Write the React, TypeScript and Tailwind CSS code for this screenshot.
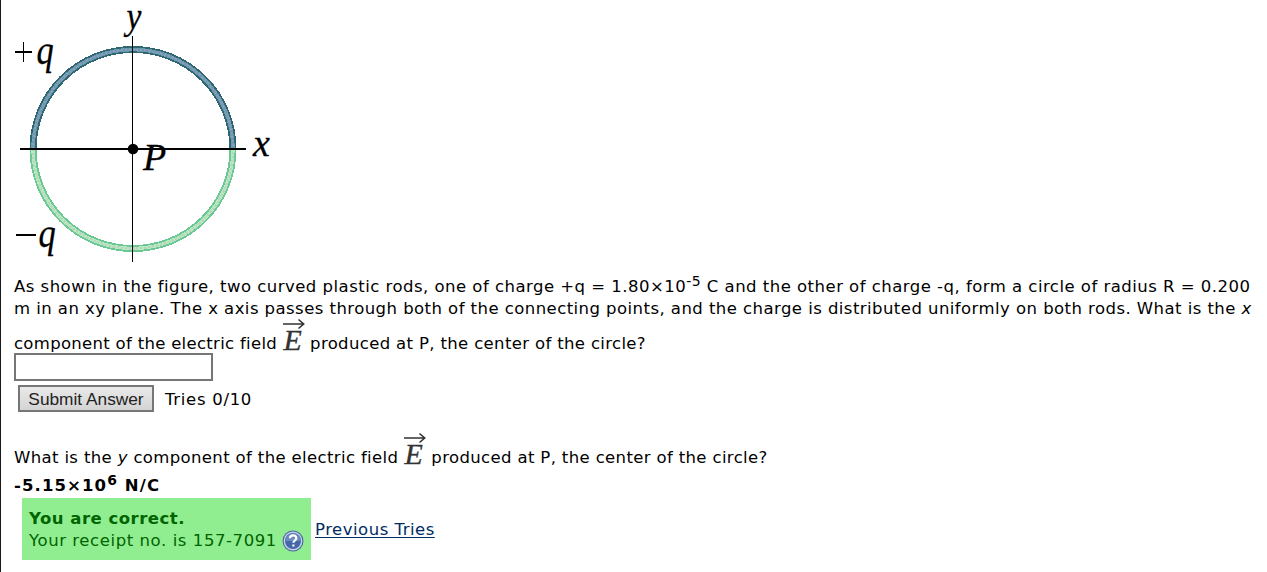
function Rods() {
  return (
    <svg
      className="-ml-[13px] block h-[276px] w-[290px]"
      viewBox="0 0 290 276"
      fill="none"
      aria-label="Two charged rods forming a circle"
    >
      {/* negative rod */}
      <g shapeRendering="crispEdges">
        <path d="M32 149a100 99.5 0 0 0 200 0" stroke="#6bc796" strokeWidth="7" />
        <path d="M32 149a100 99.5 0 0 0 200 0" stroke="#b2ecb9" strokeWidth="3.4" />
        <path d="M32 149a100 99.5 0 0 0 200 0" stroke="#c3cdc8" strokeWidth="2.2" strokeDasharray="2 2" />
        {/* positive rod */}
        <path d="M32 149a100 99.5 0 0 1 200 0" stroke="#2f6670" strokeWidth="7" />
        <path d="M32 149a100 99.5 0 0 1 200 0" stroke="#679cad" strokeWidth="3.6" />
        <path d="M32 149a100 99.5 0 0 1 200 0" stroke="#9298c4" strokeWidth="2" strokeDasharray="2 2" />
      </g>
      {/* axes */}
      <path d="M19 149h226" stroke="#000" strokeWidth="2" shapeRendering="crispEdges" />
      <path d="M131.5 36v226" stroke="#000" shapeRendering="crispEdges" />
      <circle cx="132" cy="149" r="5.3" fill="#000" />
      {/* signs */}
      <path d="M14 52h17M22.5 42v20M15 235h20" stroke="#000" strokeWidth="1.5" shapeRendering="crispEdges" />
      <g fill="#000" stroke="#000" strokeWidth="0.3" fontSize="43" className="font-['Liberation_Serif'] italic">
        <text transform="translate(35.5 63.5) scale(.8 1)">q</text>
        <text transform="translate(37.5 246.5) scale(.8 1)">q</text>
        <text transform="translate(125.5 28.5) scale(.88 1)" fontSize="38">y</text>
        <text x="142" y="169.5" fontSize="38">P</text>
        <text x="252" y="156" fontSize="38">x</text>
      </g>
    </svg>
  );
}

function VectorE() {
  return (
    <svg className="inline-block h-[29px] w-[23px] overflow-visible align-baseline" viewBox="0 2 23 29" fill="none">
      <path d="M1 6h20.5M16.5 1.5l5.2 4.5-5.2 4.5" stroke="#333" strokeWidth="1.6" />
      <text
        x="1.5"
        y="31.5"
        fontSize="30"
        fill="#333"
        stroke="#333"
        strokeWidth="0.3"
        className="font-['Liberation_Serif'] tracking-normal italic"
      >
        E
      </text>
    </svg>
  );
}

function HelpIcon() {
  return (
    <svg className="h-[22px] w-[22px]" viewBox="0 0 22 22">
      <circle cx="11" cy="11" r="10.5" fill="#4a67a0" />
      <circle cx="11" cy="11" r="9.4" fill="#c5d1e8" />
      <circle cx="11" cy="11" r="8" fill="#4467a8" />
      <path d="M3.5 11a7.5 7.5 0 0 1 15 0z" fill="#6d8bc0" />
      <path
        d="M7.9 8.3c.2-4 6.6-3.7 6.4 0-.1 2-2.9 2-2.9 4.4M11.4 14.5v2"
        fill="none"
        stroke="#fff"
        strokeWidth="2.2"
      />
    </svg>
  );
}

export default function App() {
  return (
    <main className="h-[572px] overflow-hidden border-l border-[#1a1a1a] bg-white pl-[13px] font-['DejaVu_Sans',sans-serif] text-[16.5px] leading-[22px] whitespace-nowrap text-black">
      <Rods />

      <section>
        <p className="h-[22px] tracking-[0.48px]">
          As shown in the figure, two curved plastic rods, one of charge +q = 1.80×10
          <sup className="relative -top-1.5 align-baseline text-[14px] leading-none">-5</sup> C and the other of charge -q,
          form a circle of radius R = 0.200
        </p>
        <p className="h-[22px] tracking-[0.445px]">
          m in an xy plane. The x axis passes through both of the connecting points, and the charge is
          distributed uniformly on both rods. What is the <i>x</i>
        </p>
        <p className="flex h-[33px] items-baseline tracking-[0.3px]">
          <span>component of the electric field</span>
          <span className="mr-[5px] ml-[5px]"><VectorE /></span>
          <span className="tracking-[0.35px]">produced at P, the center of the circle?</span>
        </p>
        <input
          className="block h-[28px] w-[199px] border-2 border-[#767676] bg-white px-1 outline-none"
          aria-label="Answer"
        />
        <div className="mt-1 ml-1 flex h-[27px] items-center gap-[11px]">
          <button
            type="button"
            className="h-[27px] w-[136px] border-2 border-[#767676] bg-linear-to-b from-[#e9e9e9] to-[#d4d4d4] font-['Liberation_Sans'] text-[17.3px] leading-[22px] text-[#222]"
          >
            Submit Answer
          </button>
          <span className="pt-[2px] tracking-[0.7px]">Tries 0/10</span>
        </div>
      </section>

      <section className="mt-[22px]">
        <p className="flex h-[41px] items-baseline tracking-[0.36px]">
          <span>What is the <i>y</i> component of the electric field</span>
          <span className="mr-[5px] ml-[5px]"><VectorE /></span>
          <span>produced at P, the center of the circle?</span>
        </p>
        <p className="h-[23px] font-bold tracking-[1.1px]">
          -5.15×10<sup className="relative -top-1.5 align-baseline text-[14px] leading-none">6</sup> N/C
        </p>
        <div className="ml-2 flex items-center gap-1">
          <div className="h-[62px] w-[289px] bg-[#90ee90] pt-[10px] pl-[7px] text-[#006400]">
            <p className="font-bold tracking-[0.5px]">You are correct.</p>
            <p className="flex items-center gap-[5px]">
              <span className="tracking-[0.58px]">Your receipt no. is 157-7091</span>
              <HelpIcon />
            </p>
          </div>
          <a href="#" className="pt-[2px] tracking-[0.5px] text-[#002b62] underline underline-offset-2">Previous Tries</a>
        </div>
      </section>
    </main>
  );
}
